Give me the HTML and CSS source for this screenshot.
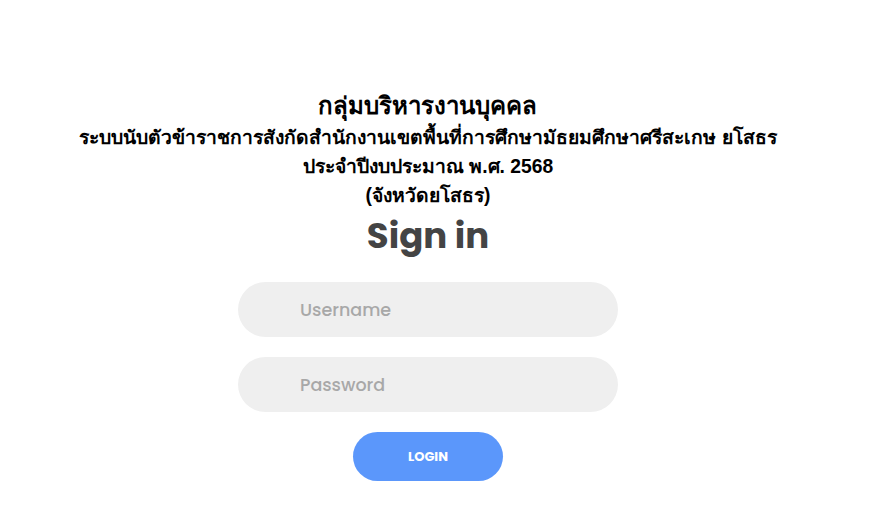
FILE: index.html
```html
<!DOCTYPE html>
<html lang="th">
<head>
<meta charset="utf-8">
<title>Sign in</title>
<link rel="stylesheet" href="styles.css">
</head>
<body>
<div class="page">
  <div class="heading">
    <div class="title">กลุ่มบริหารงานบุคคล</div>
    <div class="sub">ระบบนับตัวข้าราชการสังกัดสำนักงานเขตพื้นที่การศึกษามัธยมศึกษาศรีสะเกษ ยโสธร</div>
    <div class="sub">ประจำปีงบประมาณ พ.ศ. 2568</div>
    <div class="sub">(จังหวัดยโสธร)</div>
  </div>
  <form class="form">
    <h1 class="signin">Sign in</h1>
    <input class="field" type="text" placeholder="Username">
    <input class="field" type="password" placeholder="Password">
    <button class="login" type="button">LOGIN</button>
  </form>
</div>
</body>
</html>
```
FILE: styles.css
```css
html, body {
  margin: 0;
  padding: 0;
  background: #fff;
}
.page {
  width: 856px;
  padding-top: 89px;
  display: flex;
  flex-direction: column;
  align-items: center;
  font-family: "Liberation Sans", "Noto Sans", "DejaVu Sans", sans-serif;
}
.heading {
  text-align: center;
  color: #000;
  font-weight: bold;
}
.title {
  font-size: 24px;
  line-height: 34px;
}
.sub {
  font-size: 19.3px;
  line-height: 29px;
}
.form {
  display: flex;
  flex-direction: column;
  align-items: center;
  font-family: "Poppins", "Inter", "Lato", sans-serif;
}
.signin {
  margin: 4px 0 24px;
  font-size: 35.5px;
  line-height: 44px;
  font-weight: 700;
  color: #444;
}
.field {
  box-sizing: border-box;
  width: 380px;
  height: 55px;
  margin-bottom: 20px;
  border: none;
  outline: none;
  border-radius: 28px;
  background: #efefef;
  padding: 0 0 0 62px;
  font-family: inherit;
  font-size: 17.5px;
  font-weight: 500;
  color: #333;
}
.field::placeholder {
  color: #a8a8a8;
}
.login {
  width: 150px;
  height: 49px;
  border: none;
  border-radius: 25px;
  background: #5b97fb;
  color: #fff;
  font-family: inherit;
  font-size: 13px;
  font-weight: 700;
}
```
